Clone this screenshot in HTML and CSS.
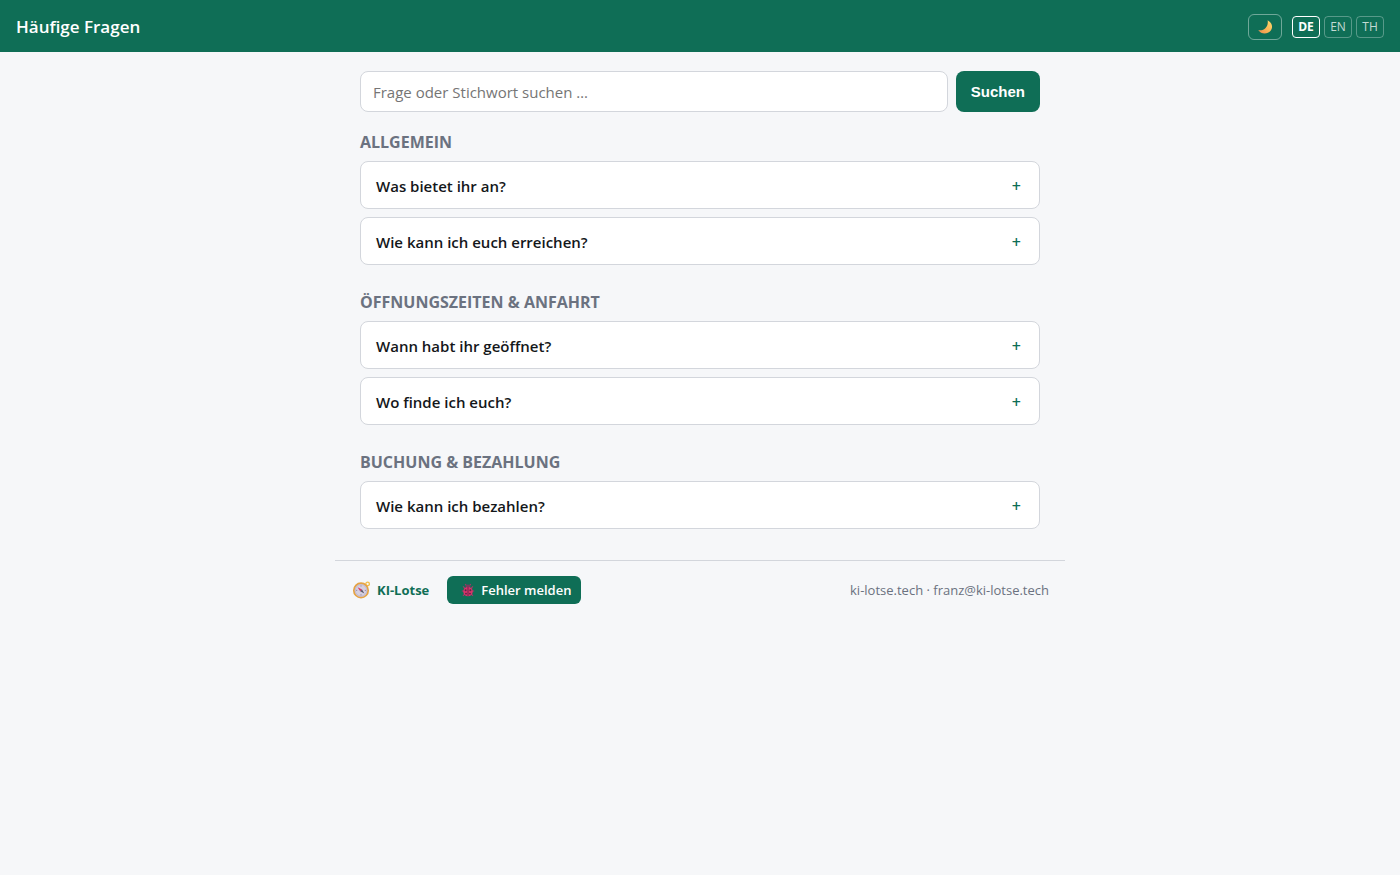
FILE: index.html
```html
<!DOCTYPE html>
<html lang="de">
<head>
    <meta charset="utf-8">
    <meta name="viewport" content="width=device-width, initial-scale=1">
    <title>Häufige Fragen</title>
    <link rel="stylesheet" href="styles.css">
</head>
<body>
    <header class="topbar">
        <h1>Häufige Fragen</h1>
        <div class="tools">
            <button type="button" class="theme" aria-label="Dunkles Design">
                <svg width="16" height="16" viewBox="0 0 16 16">
                    <defs>
                        <linearGradient id="moon" x1="0" y1="1" x2="1" y2="0">
                            <stop offset="0" stop-color="#f08a4b"/>
                            <stop offset="0.5" stop-color="#f9b858"/>
                            <stop offset="1" stop-color="#fddc6c"/>
                        </linearGradient>
                    </defs>
                    <path d="M10.6 1.2C15 3.4 16.4 8.4 13.6 11.8C10.4 15.6 4.2 15.6 1.2 11C7 12.4 11.8 7.6 10.6 1.2Z" fill="url(#moon)"/>
                </svg>
            </button>
            <nav class="langs">
                <a href="#de" class="lang active">DE</a>
                <a href="#en" class="lang">EN</a>
                <a href="#th" class="lang">TH</a>
            </nav>
        </div>
    </header>

    <main>
        <form class="search" id="searchForm">
            <input type="search" id="q" name="q" placeholder="Frage oder Stichwort suchen …" aria-label="Frage oder Stichwort suchen">
            <button type="submit">Suchen</button>
        </form>

        <section>
            <h2>Allgemein</h2>
            <details>
                <summary>Was bietet ihr an?</summary>
            </details>
            <details>
                <summary>Wie kann ich euch erreichen?</summary>
            </details>
        </section>

        <section>
            <h2>Öffnungszeiten &amp; Anfahrt</h2>
            <details>
                <summary>Wann habt ihr geöffnet?</summary>
            </details>
            <details>
                <summary>Wo finde ich euch?</summary>
            </details>
        </section>

        <section>
            <h2>Buchung &amp; Bezahlung</h2>
            <details>
                <summary>Wie kann ich bezahlen?</summary>
            </details>
        </section>
    </main>

    <footer>
        <a href="#lotse" class="brand">
            <svg width="20" height="18" viewBox="0 0 20 18">
                <circle cx="16.6" cy="2.9" r="1.8" fill="none" stroke="#f2bd4a" stroke-width="1.3"/>
                <circle cx="10" cy="9.4" r="7.2" fill="#d5cfdf" stroke="#e5a343" stroke-width="1.7"/>
                <circle cx="10" cy="9.4" r="5.8" fill="none" stroke="#b6aac6" stroke-width="0.6"/>
                <path d="M10 4.4V5.6M10 13.2V14.4M5 9.4H6.2M13.8 9.4H15" stroke="#8a7f99" stroke-width="0.8"/>
                <path d="M6.6 6.2L11 8.6L9.2 10.2Z" fill="#e0345c"/>
                <path d="M13.4 12.6L11 8.6L9.2 10.2Z" fill="#5b5464"/>
            </svg>
            KI-Lotse
        </a>
        <button type="button" class="report">
            <svg width="14" height="14" viewBox="0 0 14 14">
                <path d="M2 3.4L4 5.4M12 3.4L10 5.4M0.8 8H3M13.2 8H11M2 12.8L3.8 10.8M12 12.8L10.2 10.8M5.4 2.6L4.2 1M8.6 2.6L9.8 1" stroke="#a23a68" stroke-width="1.1"/>
                <circle cx="7" cy="3.8" r="2.4" fill="#7b3a5e"/>
                <ellipse cx="7" cy="8.6" rx="4.8" ry="4.7" fill="#d9336b"/>
                <path d="M7 4V13" stroke="#5d2446" stroke-width="0.9"/>
                <circle cx="4.6" cy="7.2" r="1" fill="#5d2446"/>
                <circle cx="9.4" cy="7.2" r="1" fill="#5d2446"/>
                <circle cx="5" cy="10.6" r="0.9" fill="#5d2446"/>
                <circle cx="9" cy="10.6" r="0.9" fill="#5d2446"/>
            </svg>
            Fehler melden
        </button>
        <span class="contact"><a href="#web">ki-lotse.tech</a> · <a href="#mail">franz@ki-lotse.tech</a></span>
    </footer>

    <script>
        document.getElementById('searchForm').addEventListener('submit', function(e) {
            e.preventDefault();
        });
    </script>
</body>
</html>
```
FILE: styles.css
```css
* {
    box-sizing: border-box;
}

body {
    margin: 0;
    font-family: "Segoe UI", "Open Sans", "Noto Sans", sans-serif;
    font-size: 15px;
    line-height: 24px;
    color: #14171a;
    background: #f6f7f9;
}

.topbar {
    display: flex;
    align-items: center;
    justify-content: space-between;
    padding: 14px 16px 12px;
    background: #0f6e56;
}

.topbar h1 {
    margin: 0;
    font-size: 17px;
    line-height: 26px;
    font-weight: 600;
    color: #fff;
}

.tools {
    display: flex;
    align-items: center;
    gap: 10px;
}

.theme {
    display: flex;
    align-items: center;
    justify-content: center;
    width: 34px;
    height: 26px;
    padding: 0;
    border: 1px solid rgba(255, 255, 255, 0.4);
    border-radius: 6px;
    background: none;
    cursor: pointer;
}

.langs {
    display: flex;
    gap: 4px;
}

.lang {
    width: 28px;
    border: 1px solid rgba(255, 255, 255, 0.3);
    border-radius: 4px;
    font-size: 12px;
    line-height: 20px;
    text-align: center;
    text-decoration: none;
    color: rgba(255, 255, 255, 0.75);
}

.lang.active {
    border-color: #fff;
    font-weight: 700;
    color: #fff;
}

main {
    max-width: 712px;
    margin: 0 auto;
    padding: 19px 16px 0;
}

.search {
    display: flex;
    gap: 8px;
    margin-bottom: 18px;
}

.search input {
    flex: 1;
    min-width: 0;
    height: 41px;
    padding: 0 12px;
    border: 1px solid #d3d6dc;
    border-radius: 8px;
    font: inherit;
    background: #fff;
    appearance: none;
}

.search input::placeholder {
    color: #757575;
}

.search button {
    padding: 0 15px;
    border: none;
    border-radius: 8px;
    font-family: Arial, "Liberation Sans", sans-serif;
    font-size: 15px;
    font-weight: 700;
    color: #fff;
    background: #0f6e56;
    cursor: pointer;
}

section {
    margin-bottom: 25px;
}

h2 {
    margin: 0 0 7px;
    font-size: 16px;
    line-height: 24px;
    font-weight: 700;
    text-transform: uppercase;
    color: #6b7280;
}

details {
    margin-bottom: 8px;
    border: 1px solid #d3d6dc;
    border-radius: 8px;
    background: #fff;
}

summary {
    display: flex;
    justify-content: space-between;
    padding: 12px 18px 10px 15px;
    font-weight: 600;
    list-style: none;
    cursor: pointer;
}

summary::after {
    content: "+";
    font-size: 16px;
    color: #0f6e56;
}

details[open] summary::after {
    content: "–";
}

footer {
    display: flex;
    align-items: center;
    gap: 18px;
    max-width: 730px;
    margin: 31px auto 0;
    padding: 15px 16px;
    border-top: 1px solid #d3d6dc;
    font-size: 13px;
    color: #6b7280;
}

footer a {
    color: inherit;
    text-decoration: none;
}

footer .brand {
    display: flex;
    align-items: center;
    gap: 6px;
    font-weight: 700;
    color: #0f6e56;
}

.report {
    display: flex;
    align-items: center;
    gap: 6px;
    height: 28px;
    padding: 0 10px 0 14px;
    border: none;
    border-radius: 6px;
    font: inherit;
    font-weight: 600;
    color: #fff;
    background: #0f6e56;
    cursor: pointer;
}

.contact {
    margin-left: auto;
}
```
